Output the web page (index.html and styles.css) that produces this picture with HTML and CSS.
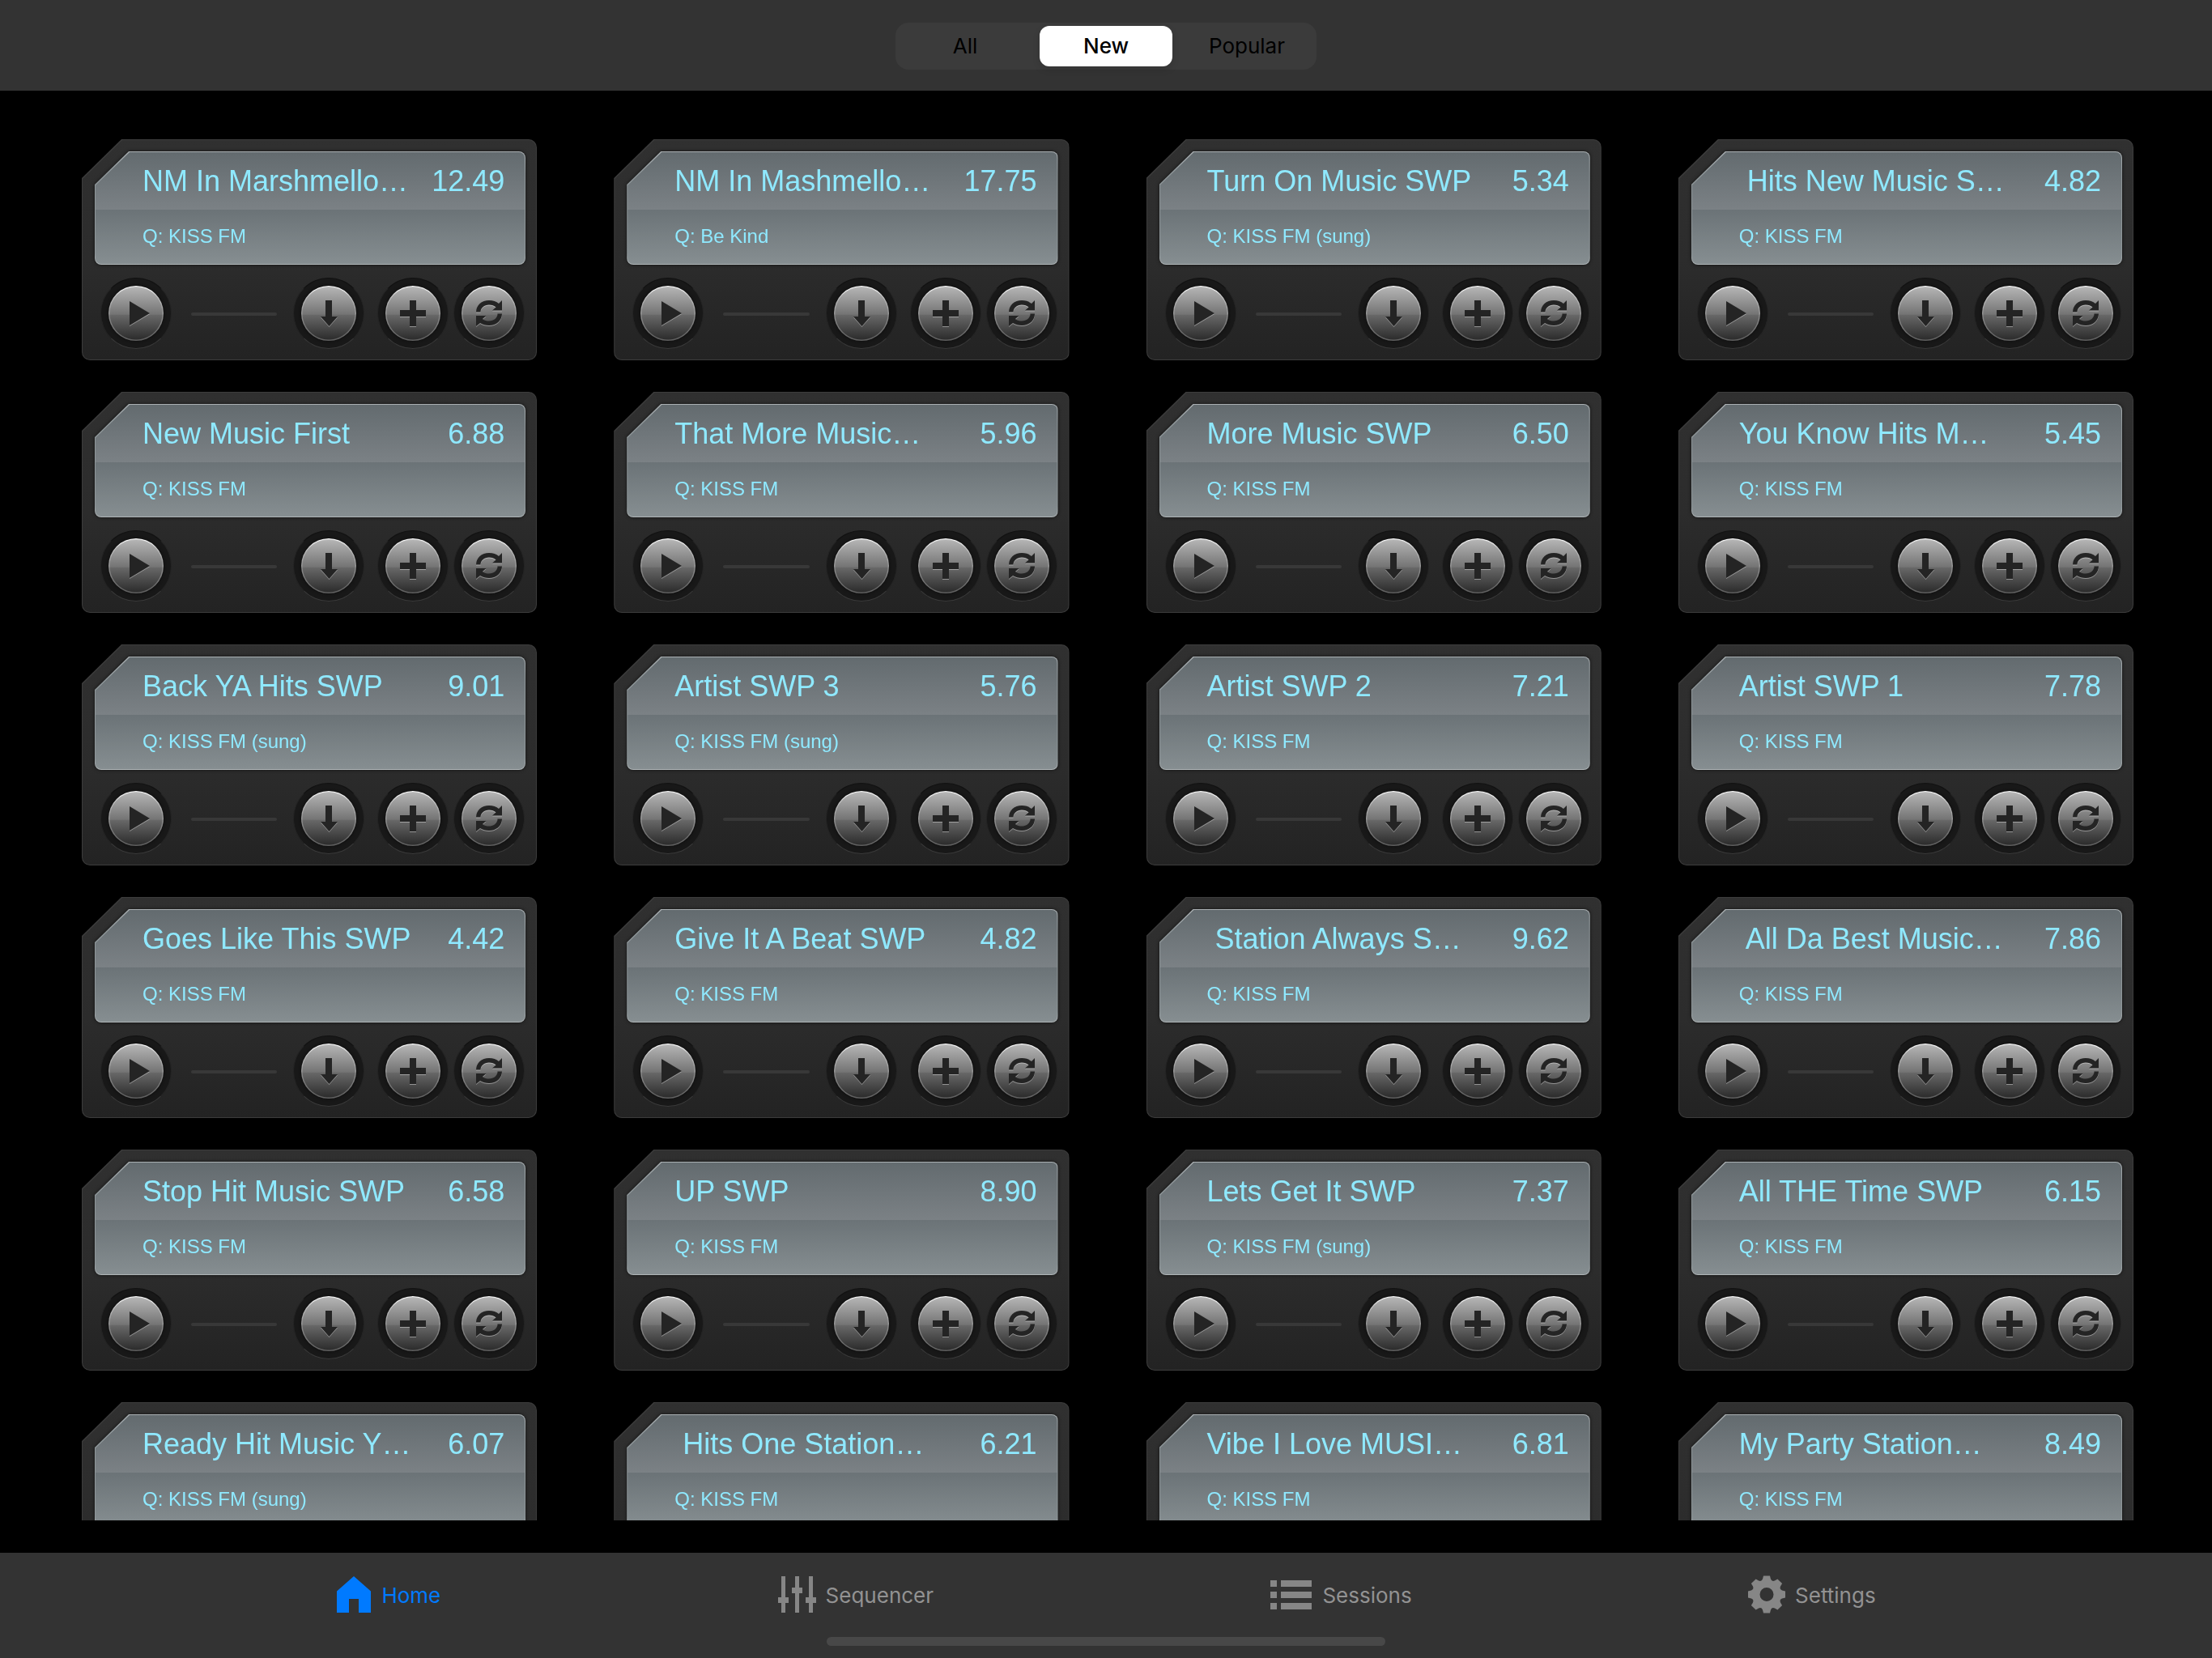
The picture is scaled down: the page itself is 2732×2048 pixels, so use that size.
FILE: index.html
```html
<!DOCTYPE html>
<html lang="en">
<head>
<meta charset="utf-8">
<meta name="viewport" content="width=device-width, initial-scale=1">
<title>Jingles</title>
<link rel="stylesheet" href="styles.css">
</head>
<body>
<svg class="sprite" aria-hidden="true">
  <defs>
    <symbol id="play" viewBox="0 0 68 68"><path d="M26 19 51 34 26 49Z"/></symbol>
    <symbol id="download" viewBox="0 0 68 68"><path d="M30 18h8v20h7L34.500 50 24 38h6Z"/></symbol>
    <symbol id="add" viewBox="0 0 68 68"><path d="M30 18h8v12h12v8H38v12h-8V38H18v-8h12Z"/></symbol>
    <symbol id="sync" viewBox="0 0 68 68">
      <path d="M18 32.500C18 24 25 18 34 18c5 0 9 1.500 12 4l4-4v12.500H38l4.500-4c-2-2-5-3-8.500-3-6 0-10.500 4-10.500 9Z"/>
      <path d="M50 34.500C50 43 43 49 34 49c-4 0-8-1-11-3l-5 4V37h12.500l-4.500 4c2 2 5 2.500 8 2.500 6 0 10.500-4 10.500-9Z"/>
    </symbol>
  </defs>
</svg>

<header class="topbar">
  <fieldset class="segmented">
    <label class="segment"><input type="radio" name="filter" value="all"><span>All</span></label>
    <label class="segment"><input type="radio" name="filter" value="new" checked><span>New</span></label>
    <label class="segment"><input type="radio" name="filter" value="popular"><span>Popular</span></label>
  </fieldset>
</header>

<main class="library" id="library"></main>

<template id="card-template">
  <article class="card">
    <div class="display">
      <div class="glass">
        <div class="headline"><h2 class="title"></h2><span class="duration"></span></div>
        <p class="caption"></p>
      </div>
    </div>
    <div class="controls">
      <button class="knob knob-play" type="button" aria-label="Play"><svg><use href="#play"/></svg></button>
      <progress class="track" value="0" max="1" aria-label="Playback position"></progress>
      <button class="knob knob-download" type="button" aria-label="Download"><svg><use href="#download"/></svg></button>
      <button class="knob knob-add" type="button" aria-label="Add"><svg><use href="#add"/></svg></button>
      <button class="knob" type="button" aria-label="Sync"><svg><use href="#sync"/></svg></button>
    </div>
  </article>
</template>

<footer class="tabbar">
  <nav class="tabs">
    <a class="tab tab-active" href="#home">
      <svg width="44" height="48" viewBox="0 0 44 48"><path d="M22 1 43 19.500V46H28V29H16V46H1V19.500Z"/></svg>
      <span>Home</span>
    </a>
    <a class="tab" href="#sequencer">
      <svg width="48" height="48" viewBox="0 0 48 48"><path d="M5 1h5v26h4v7h-4v12H5V34H1v-7h4ZM22 1h5v14h4v7h-4v24h-5V22h-4v-7h4ZM39 1h5v26h4v7h-4v12h-5V34h-4v-7h4Z"/></svg>
      <span>Sequencer</span>
    </a>
    <a class="tab" href="#sessions">
      <svg width="53" height="48" viewBox="0 0 53 48"><path d="M1 6h8v8H1ZM14 6h38v8H14ZM1 20h8v8H1ZM14 20h38v8H14ZM1 34h8v8H1ZM14 34h38v8H14Z"/></svg>
      <span>Sessions</span>
    </a>
    <a class="tab" href="#settings">
      <svg width="46" height="48" viewBox="-23 -23.500 46 48"><path fill-rule="evenodd" d="M-5-19-4-23H4L5-19Q6.500-15.500 9.900-17L13.400-19.100 19.100-13.400 17-9.900Q15.500-6.500 19-5L23-4V4L19 5Q15.500 6.500 17 9.900L19.100 13.400 13.400 19.100 9.900 17Q6.500 15.500 5 19L4 23H-4L-5 19Q-6.500 15.500-9.900 17L-13.400 19.100-19.100 13.400-17 9.900Q-15.500 6.500-19 5L-23 4V-4L-19-5Q-15.500-6.500-17-9.900L-19.100-13.400-13.400-19.100-9.900-17Q-6.500-15.500-5-19ZM0-8.500a8.500 8.500 0 1 0 0 17 8.500 8.500 0 1 0 0-17Z"/></svg>
      <span>Settings</span>
    </a>
  </nav>
  <div class="home-indicator"></div>
</footer>
<script src="app.js"></script>
</body>
</html>
```
FILE: styles.css
```css
* { box-sizing: border-box; }

body {
  margin: 0;
  height: 100vh;
  display: flex;
  flex-direction: column;
  background: #000;
  font-family: "Liberation Sans", Arial, sans-serif;
}

h2, p { margin: 0; font-weight: 400; }

.sprite { display: none; }

/* Top bar */
.topbar {
  flex: none;
  display: flex;
  justify-content: center;
  padding: 28px 0 26px;
  background: #333;
}

.segmented {
  display: grid;
  grid-template-columns: repeat(3, 1fr);
  width: 520px;
  height: 58px;
  margin: 0;
  padding: 4px;
  gap: 10px;
  border: 0;
  border-radius: 16px;
  background: #3b3b3b;
}

.segment {
  display: grid;
  font: 26px/50px Inter, sans-serif;
  text-align: center;
  color: #000;
}

.segment input,
.segment span { grid-area: 1 / 1; }

.segment input {
  appearance: none;
  margin: 0;
  border-radius: 12px;
}

.segment input:checked {
  background: #fff;
  box-shadow: 0 4px 10px rgba(0, 0, 0, .12);
}

.segment input:checked + span { font-weight: 500; }
.segment span { z-index: 1; }

/* Library */
.library {
  flex: 1;
  min-height: 0;
  overflow: hidden;
  display: grid;
  grid-template-columns: repeat(4, 1fr);
  grid-auto-rows: max-content;
  gap: 39px 95px;
  margin: 0 97px 40px 101px;
  padding-top: 60px;
}

.card {
  position: relative;
  padding: 15px 14px 14px 16px;
  border-radius: 0 10px 10px 10px;
  background: #3c3c3c;
  clip-path: polygon(49px 0, 100% 0, 100% 100%, 0 100%, 0 48px);
}

.card::before {
  content: "";
  position: absolute;
  inset: 1px;
  border-radius: 0 9px 9px 9px;
  background: linear-gradient(#303030, #2c2c2c 55%, #232323);
  clip-path: polygon(49px 0, 100% 0, 100% 100%, 0 100%, 0 48px);
}

.display {
  position: relative;
  filter: drop-shadow(0 0 2px #111);
}

.glass {
  position: relative;
  height: 140px;
  padding: 18px 26px 0 59px;
  border-radius: 0 8px 8px 8px;
  background: linear-gradient(#aab0b3, #8f979a 20%, #8f979a 90%, #b0b6b8);
  clip-path: polygon(42px 0, 100% 0, 100% 100%, 0 100%, 0 41px);
  color: #8fe9ff;
}

.glass::before {
  content: "";
  position: absolute;
  inset: 1px;
  border-radius: 0 7px 7px 7px;
  background:
    linear-gradient(#636b6f, #7b8185) 0 0 / 100% 71px no-repeat,
    linear-gradient(#6b7377, #868e91) 0 71px / 100% 67px no-repeat;
  clip-path: polygon(42px 0, 100% 0, 100% 100%, 0 100%, 0 41px);
}

.headline,
.caption { position: relative; white-space: pre; }

.headline {
  display: flex;
  justify-content: space-between;
  font-size: 36px;
  line-height: 38px;
}

.title { font-size: 36px; }

.caption {
  margin-top: 35px;
  font-size: 24px;
  line-height: 28px;
}

.controls {
  position: relative;
  display: flex;
  align-items: center;
  margin: 16px 1px 0 7px;
}

.knob {
  flex: none;
  width: 88px;
  height: 88px;
  padding: 9px;
  border: 1px solid #242424;
  border-top-color: #121212;
  border-bottom-color: #3a3a3a;
  border-radius: 50%;
  background: #181818;
}

.knob-play { margin-right: 24px; }
.knob-download { margin-right: 16px; margin-left: 20px; }
.knob-add { margin-right: 6px; }

.knob svg {
  display: block;
  width: 68px;
  height: 68px;
  border-radius: 50%;
  background:
    radial-gradient(circle at 50% 50%, transparent 32px, rgba(255, 255, 255, .25) 33px),
    linear-gradient(#b8b8b8, #747474 52%, #686868 53%, #292929);
  box-shadow: inset 0 2px 1px -1px #fff, 0 0 3px 1px #101010;
  fill: #242424;
}

.knob use { filter: drop-shadow(0 1px 0 rgba(255, 255, 255, .4)); }

.track {
  appearance: none;
  flex: 1;
  min-width: 0;
  width: 0;
  height: 4px;
  margin-top: 2px;
  border: 0;
  border-radius: 2px;
  overflow: hidden;
  background: #383838;
}

.track::-webkit-progress-bar { background: #383838; }

/* Tab bar */
.tabbar {
  flex: none;
  padding: 28px 0 15px;
  background: #333;
}

.tabs {
  display: flex;
  justify-content: space-evenly;
}

.tab {
  display: flex;
  gap: 12px;
  font: 26px/50px Inter, sans-serif;
  color: #929292;
  text-decoration: none;
}

.tab svg { fill: #868686; }
.tab-active { color: #007aff; }
.tab-active svg { fill: #007aff; }

.home-indicator {
  width: 690px;
  height: 11px;
  margin: 26px auto 0;
  border-radius: 6px;
  background: #484848;
}
```
FILE: app.js
```js
const jingles = [
  ["NM In Marshmello…", "12.49", "Q: KISS FM"],
  ["NM In Mashmello…", "17.75", "Q: Be Kind"],
  ["Turn On Music SWP", "5.34", "Q: KISS FM (sung)"],
  [" Hits New Music S…", "4.82", "Q: KISS FM"],
  ["New Music First", "6.88", "Q: KISS FM"],
  ["That More Music…", "5.96", "Q: KISS FM"],
  ["More Music SWP", "6.50", "Q: KISS FM"],
  ["You Know Hits M…", "5.45", "Q: KISS FM"],
  ["Back YA Hits SWP", "9.01", "Q: KISS FM (sung)"],
  ["Artist SWP 3", "5.76", "Q: KISS FM (sung)"],
  ["Artist SWP 2", "7.21", "Q: KISS FM"],
  ["Artist SWP 1", "7.78", "Q: KISS FM"],
  ["Goes Like This SWP", "4.42", "Q: KISS FM"],
  ["Give It A Beat SWP", "4.82", "Q: KISS FM"],
  [" Station Always S…", "9.62", "Q: KISS FM"],
  [" All Da Best Music…", "7.86", "Q: KISS FM"],
  ["Stop Hit Music SWP", "6.58", "Q: KISS FM"],
  ["UP SWP", "8.90", "Q: KISS FM"],
  ["Lets Get It SWP", "7.37", "Q: KISS FM (sung)"],
  ["All THE Time SWP", "6.15", "Q: KISS FM"],
  ["Ready Hit Music Y…", "6.07", "Q: KISS FM (sung)"],
  [" Hits One Station…", "6.21", "Q: KISS FM"],
  ["Vibe I Love MUSI…", "6.81", "Q: KISS FM"],
  ["My Party Station…", "8.49", "Q: KISS FM"],
];

const library = document.getElementById("library");
const template = document.getElementById("card-template");

for (const [title, duration, caption] of jingles) {
  const card = template.content.cloneNode(true);
  card.querySelector(".title").textContent = title;
  card.querySelector(".duration").textContent = duration;
  card.querySelector(".caption").textContent = caption;
  library.append(card);
}
```
